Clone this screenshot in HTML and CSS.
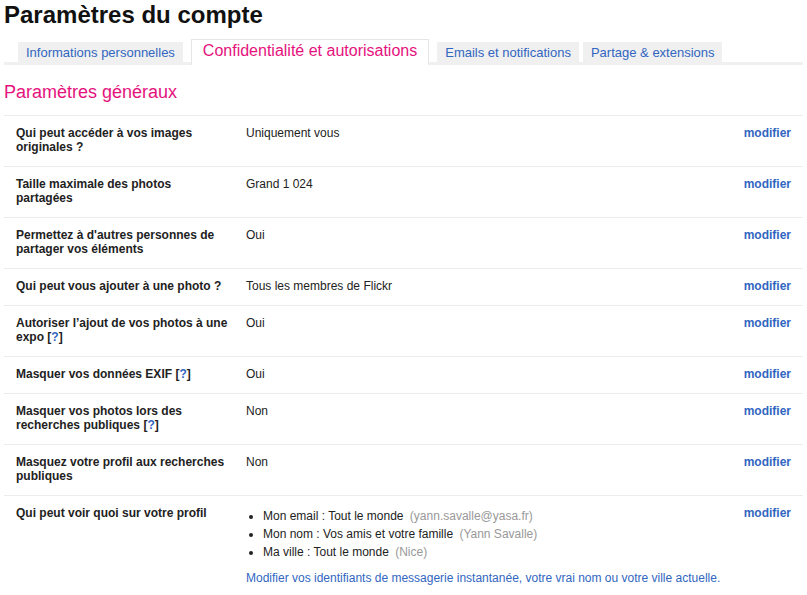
FILE: index.html
```html
<!DOCTYPE html>
<html lang="fr">
<head>
  <meta charset="UTF-8">
  <title>Paramètres du compte</title>
  <link rel="stylesheet" href="styles.css">
</head>
<body>
  <div class="page">
    <h1>Paramètres du compte</h1>

    <ul class="tabs">
      <li class="tab"><a href="#">Informations personnelles</a></li>
      <li class="tab active"><a href="#">Confidentialité et autorisations</a></li>
      <li class="tab"><a href="#">Emails et notifications</a></li>
      <li class="tab last"><a href="#">Partage &amp; extensions</a></li>
    </ul>

    <h2>Paramètres généraux</h2>

    <table class="settings">
      <colgroup>
        <col class="col-label">
        <col>
        <col class="col-action">
      </colgroup>
      <tr>
        <th>Qui peut accéder à vos images originales ?</th>
        <td class="value">Uniquement vous</td>
        <td class="action"><a href="#">modifier</a></td>
      </tr>
      <tr>
        <th>Taille maximale des photos partagées</th>
        <td class="value">Grand 1 024</td>
        <td class="action"><a href="#">modifier</a></td>
      </tr>
      <tr>
        <th>Permettez à d'autres personnes de partager vos éléments</th>
        <td class="value">Oui</td>
        <td class="action"><a href="#">modifier</a></td>
      </tr>
      <tr>
        <th>Qui peut vous ajouter à une photo ?</th>
        <td class="value">Tous les membres de Flickr</td>
        <td class="action"><a href="#">modifier</a></td>
      </tr>
      <tr>
        <th>Autoriser l’ajout de vos photos à une expo [<a href="#" class="help">?</a>]</th>
        <td class="value">Oui</td>
        <td class="action"><a href="#">modifier</a></td>
      </tr>
      <tr>
        <th>Masquer vos données EXIF [<a href="#" class="help">?</a>]</th>
        <td class="value">Oui</td>
        <td class="action"><a href="#">modifier</a></td>
      </tr>
      <tr>
        <th>Masquer vos photos lors des recherches publiques [<a href="#" class="help">?</a>]</th>
        <td class="value">Non</td>
        <td class="action"><a href="#">modifier</a></td>
      </tr>
      <tr>
        <th>Masquez votre profil aux recherches publiques</th>
        <td class="value">Non</td>
        <td class="action"><a href="#">modifier</a></td>
      </tr>
      <tr>
        <th>Qui peut voir quoi sur votre profil</th>
        <td class="value">
          <ul class="profile-list">
            <li>Mon email : Tout le monde <span class="muted">(yann.savalle@yasa.fr)</span></li>
            <li>Mon nom : Vos amis et votre famille <span class="muted">(Yann Savalle)</span></li>
            <li>Ma ville : Tout le monde <span class="muted">(Nice)</span></li>
          </ul>
          <a href="#" class="plain-link">Modifier vos identifiants de messagerie instantanée, votre vrai nom ou votre ville actuelle.</a>
        </td>
        <td class="action"><a href="#">modifier</a></td>
      </tr>
    </table>
  </div>
</body>
</html>
```

FILE: styles.css
```css
body {
  margin: 0;
  font-family: 'Liberation Sans', Arial, sans-serif;
  font-size: 12px;
  color: #222;
  background: #fff;
}

a {
  text-decoration: none;
}

.page {
  padding: 0 4px;
}

h1 {
  margin: 0;
  padding-top: 1px;
  font-size: 24px;
  line-height: 28px;
  font-weight: bold;
  color: #111;
}

.tabs {
  display: flex;
  list-style: none;
  margin: 10px 0 0;
  padding: 0 0 0 14px;
  border-bottom: 3px solid #f0f0f0;
  align-items: flex-end;
}

.tab {
  margin-right: 8px;
  background: #f0f0f0;
}

.tab a {
  display: block;
  padding: 3px 8px 2px;
  font-size: 13px;
  line-height: 15px;
  color: #3166c1;
}

.tab.active {
  background: #fff;
  border: 1px solid #e6e6e6;
  border-bottom: none;
  margin-bottom: -3px;
}

.tab.active a {
  padding: 2px 11px 5px;
  font-size: 16px;
  line-height: 18px;
  color: #e5127d;
}

.tab.last {
  margin-left: -4px;
}

.tab.last a {
  padding-right: 7px;
}

h2 {
  margin: 16px 0 0;
  font-size: 18px;
  line-height: 22px;
  font-weight: normal;
  color: #e5127d;
}

.settings {
  width: 100%;
  margin-top: 12px;
  border-collapse: collapse;
  table-layout: fixed;
}

.col-label {
  width: 242px;
}

.col-action {
  width: 62px;
}

.settings tr {
  border-top: 1px solid #ececec;
}

.settings th,
.settings td {
  vertical-align: top;
  text-align: left;
  line-height: 14px;
  padding: 10px 12px 12px;
}

.settings th {
  padding-right: 17px;
  font-weight: bold;
}

.settings .value {
  padding-left: 0;
  padding-right: 0;
}

.settings .action {
  padding-left: 0;
  text-align: right;
}

.action a {
  font-weight: bold;
  color: #3166c1;
}

.help {
  color: #3166c1;
}

.profile-list {
  margin: 1px 0 0;
  padding-left: 17px;
}

.profile-list li {
  line-height: 18px;
}

.muted {
  color: #999;
  margin-left: 3px;
}

.plain-link {
  display: block;
  margin-top: 10px;
  color: #3166c1;
}
```
